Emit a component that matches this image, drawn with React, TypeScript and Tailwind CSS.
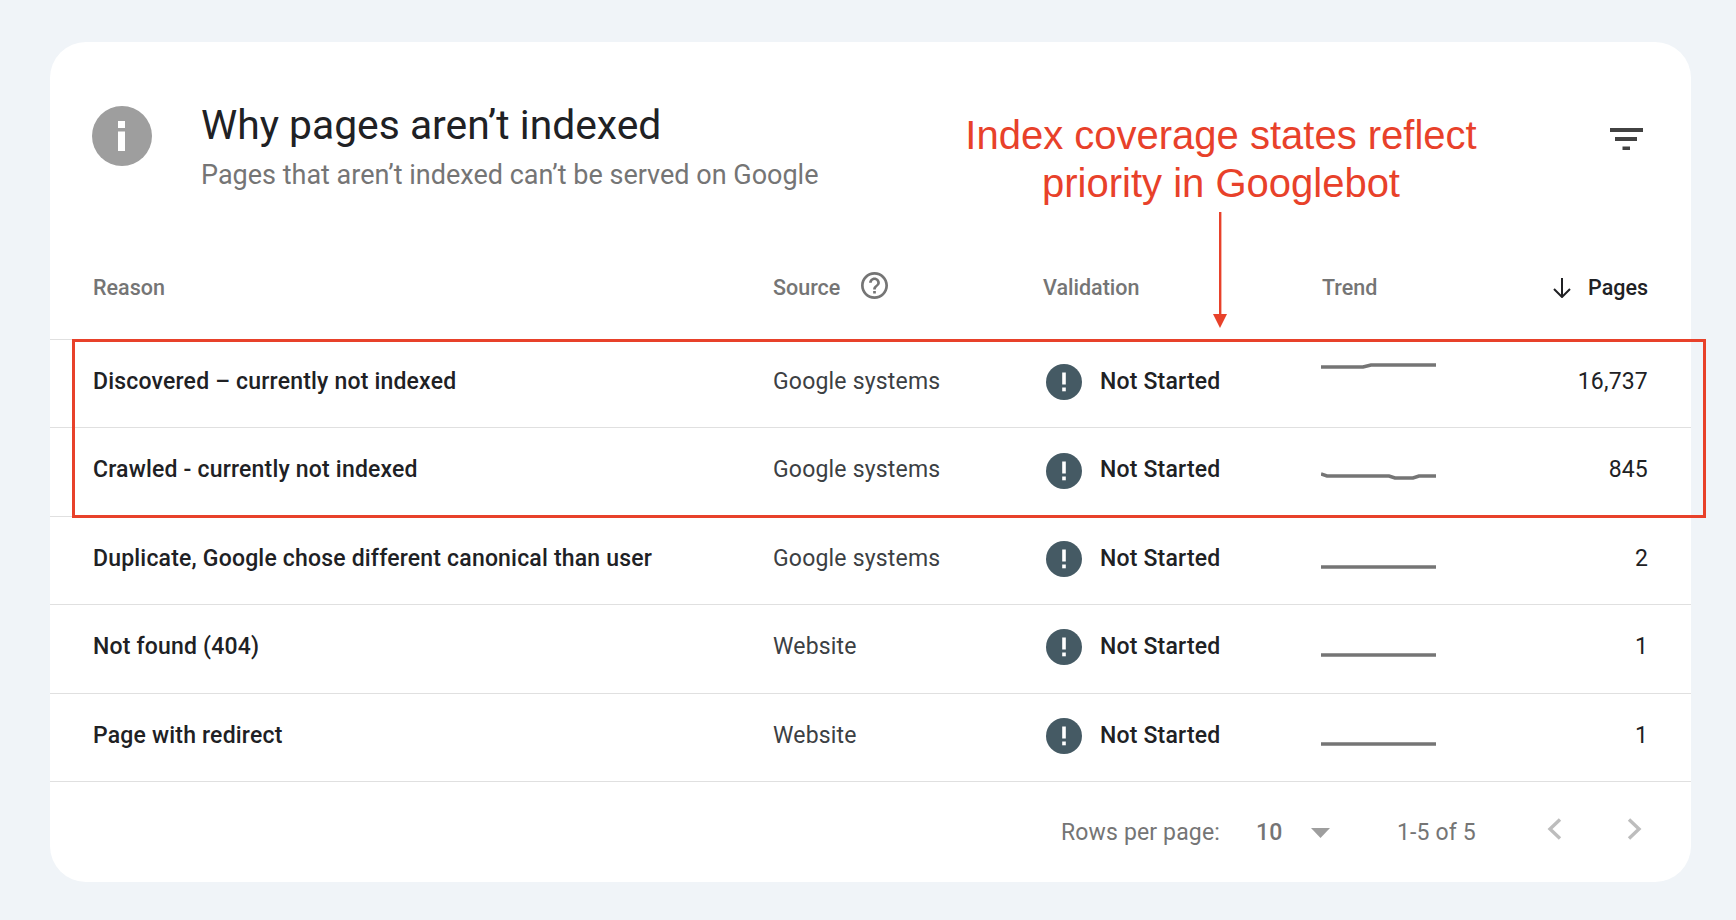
const rows = [
  { reason: 'Discovered – currently not indexed', source: 'Google systems', pages: '16,737', trend: 'M0 6 H42 L50 4 H115', top: 'items-start pt-[21px]' },
  { reason: 'Crawled - currently not indexed', source: 'Google systems', pages: '845', trend: 'M0 3 L6 5 H68 L74 7 H92 L98 5 H115', top: 'items-start pt-[43px]' },
  { reason: 'Duplicate, Google chose different canonical than user', source: 'Google systems', pages: '2', trend: 'M0 5 H115', top: 'items-start pt-[45px]' },
  { reason: 'Not found (404)', source: 'Website', pages: '1', trend: 'M0 5 H115', top: 'items-start pt-[45px]' },
  { reason: 'Page with redirect', source: 'Website', pages: '1', trend: 'M0 5 H115', top: 'items-start pt-[45px]' },
]

function StatusIcon() {
  return (
    <svg className="w-9 h-9 shrink-0" viewBox="0 0 36 36">
      <circle cx="18" cy="18" r="18" fill="#455a64" />
      <rect x="16.2" y="8.5" width="3.6" height="12" fill="#fff" />
      <rect x="16.2" y="23.5" width="3.6" height="3.8" fill="#fff" />
    </svg>
  )
}

function Trend({ d, className }: { d: string; className: string }) {
  return (
    <div className={`flex h-full -ml-[1px] ${className}`}>
      <svg className="w-[115px] h-[10px]" viewBox="0 0 115 10" fill="none">
        <path d={d} stroke="#757575" strokeWidth={3.5} />
      </svg>
    </div>
  )
}

export default function App() {
  return (
    <div className="min-h-screen bg-[#f0f4f8] pt-[42px] pl-[50px]" style={{ fontFamily: 'Roboto, sans-serif' }}>
      <div className="relative w-[1641px] h-[840px] bg-white rounded-[36px]">
        {/* Header */}
        <div className="flex h-[184px] pt-[64px] pl-[42px]">
          <svg className="w-[60px] h-[60px] shrink-0" viewBox="0 0 60 60">
            <circle cx="30" cy="30" r="30" fill="#9e9e9e" />
            <rect x="26" y="15" width="7" height="7" fill="#fff" />
            <rect x="26" y="25.5" width="7" height="19.5" fill="#fff" />
          </svg>
          <div className="ml-[49px] -mt-[6px]">
            <div className="text-[40.8px] leading-[50px] text-[#202124]">Why pages aren’t indexed</div>
            <div className="text-[27px] leading-[36px] mt-[7px] text-[#757575]">Pages that aren’t indexed can’t be served on Google</div>
          </div>
          <svg className="absolute right-[48px] top-[86px] w-[33px] h-[22px]" viewBox="0 0 33 22" fill="#424242">
            <rect x="0" y="0" width="33" height="4" />
            <rect x="5" y="9" width="22" height="4" />
            <rect x="12.5" y="18.5" width="7.5" height="3.5" />
          </svg>
        </div>

        {/* Annotation */}
        <div className="absolute left-[899px] top-[69px] w-[544px] text-center text-[40px] leading-[48px] text-[#e8412a]" style={{ fontFamily: '"Liberation Sans", sans-serif' }}>
          Index coverage states reflect
          <br />
          priority in Googlebot
        </div>
        <svg className="absolute left-[1163px] top-[170px] w-[14px] h-[118px]" viewBox="0 0 14 118">
          <rect x="6" y="0" width="2.4" height="104" fill="#e8412a" />
          <path d="M0 102 H14 L7 116 Z" fill="#e8412a" />
        </svg>

        {/* Table head */}
        <div className="grid grid-cols-[680px_270px_279px_1fr] pl-[43px] pr-[43px] h-[114px] pt-[47px] border-b border-[#e0e0e0] text-[21.5px] font-medium leading-[30px] text-[#757575]">
          <div>Reason</div>
          <div className="flex items-start gap-[21px]">
            Source
            <svg className="w-[27px] h-[27px] mt-[-1px]" viewBox="2 2 20 20" fill="#757575">
              <path d="M11 18h2v-2h-2v2zm1-16C6.48 2 2 6.48 2 12s4.48 10 10 10 10-4.48 10-10S17.52 2 12 2zm0 18c-4.41 0-8-3.59-8-8s3.59-8 8-8 8 3.59 8 8-3.59 8-8 8zm0-14c-2.21 0-4 1.79-4 4h2c0-1.1.9-2 2-2s2 .9 2 2c0 2-3 1.75-3 5h2c0-2.25 3-2.5 3-5 0-2.21-1.79-4-4-4z" />
            </svg>
          </div>
          <div>Validation</div>
          <div className="flex justify-between">
            <span>Trend</span>
            <span className="flex items-center gap-[16px] h-[30px] text-[#202124]">
              <svg className="w-[20px] h-[20px]" viewBox="0 0 20 20" fill="none" stroke="#202124" strokeWidth={2}>
                <path d="M10 0 V19 M2 11 L10 19 L18 11" />
              </svg>
              Pages
            </span>
          </div>
        </div>

        {/* Rows */}
        {rows.map((row) => (
          <div
            key={row.reason}
            className="grid grid-cols-[680px_270px_279px_1fr] items-center h-[88.4px] pl-[43px] pr-[43px] pb-[3px] border-b border-[#e0e0e0] text-[23px] tracking-[0.19px] text-[#202124]"
          >
            <div className="font-medium">{row.reason}</div>
            <div className="text-[#3c4043]">{row.source}</div>
            <div className="flex items-center gap-[18px] pl-[3px] font-medium">
              <StatusIcon />
              Not Started
            </div>
            <div className="flex justify-between items-center h-full">
              <Trend d={row.trend} className={row.top} />
              <span>{row.pages}</span>
            </div>
          </div>
        ))}

        {/* Footer */}
        <div className="flex items-center h-[100px] pt-[2px] pl-[1011px] text-[23px] tracking-[0.15px] text-[#757575]">
          <span className="w-[195px]">Rows per page:</span>
          <span className="w-[55px] font-medium">10</span>
          <svg className="w-[19px] h-[10px]" viewBox="0 0 19 10" fill="#9e9e9e">
            <path d="M0 0 H19 L9.5 10 Z" />
          </svg>
          <span className="ml-[67px] w-[150px]">1-5 of 5</span>
          <svg className="w-[15px] h-[22px] -mt-[8px]" viewBox="0 0 15 22" fill="none" stroke="#bdbdbd" strokeWidth={3.4}>
            <path d="M13 1.5 L3 11 L13 20.5" />
          </svg>
          <svg className="w-[15px] h-[22px] ml-[65px] -mt-[8px]" viewBox="0 0 15 22" fill="none" stroke="#bdbdbd" strokeWidth={3.4}>
            <path d="M2 1.5 L12 11 L2 20.5" />
          </svg>
        </div>

        {/* Highlight box */}
        <div className="absolute left-[22px] top-[297px] w-[1634px] h-[179px] border-[3px] border-[#e8412a] pointer-events-none" />
      </div>
    </div>
  )
}
